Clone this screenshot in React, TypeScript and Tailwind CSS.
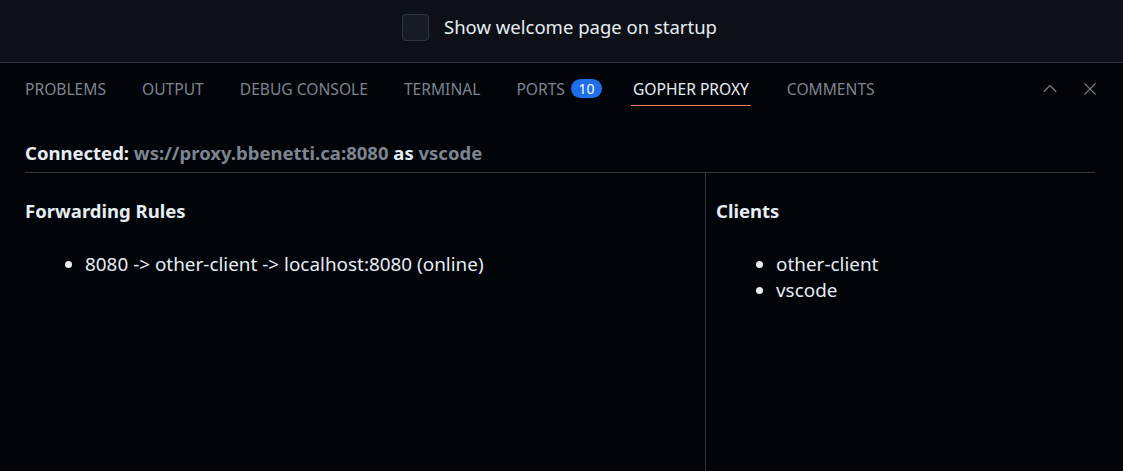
import React from "react";

export default function App() {
  const font = { fontFamily: '"Noto Sans", "Open Sans", sans-serif' };
  const tabs = ["PROBLEMS", "OUTPUT", "DEBUG CONSOLE", "TERMINAL"];
  return (
    <div className="w-[1123px] h-[471px] overflow-hidden bg-[#010409] flex flex-col" style={font}>
      <div className="h-[63px] shrink-0 bg-[#0d1117] border-b border-[#30363d] flex items-center justify-center gap-[15px] pr-[4px] pb-[8px]">
        <div className="w-[27px] h-[27px] rounded-[4px] bg-[#161b22] border border-[#30363d]" />
        <span className="text-[18.5px] text-[#e6edf3]">Show welcome page on startup</span>
      </div>
      <div className="flex items-center h-[50px] pt-[1px] pl-[25px] pr-[24px] shrink-0">
        <div className="flex items-center gap-[36px] text-[15.6px] text-[#7d8590]">
          {tabs.map((t) => (
            <span key={t} className="leading-[20px]">{t}</span>
          ))}
          <span className="flex items-center gap-[6px] leading-[20px]">
            PORTS
            <span className="h-[19px] w-[31px] justify-center rounded-full bg-[#1f6feb] text-white text-[14px] flex items-center">10</span>
          </span>
          <span className="relative text-[#e6edf3] leading-[20px] px-[2px] -ml-[7px]">
            GOPHER PROXY
            <span className="absolute left-0 right-0 top-[26px] h-px bg-[#f78166]" />
          </span>
          <span className="leading-[20px]">COMMENTS</span>
        </div>
        <div className="ml-auto flex items-center gap-[22px] text-[#7d8590]">
          <svg width="18" height="18" viewBox="0 0 16 16" fill="none" stroke="currentColor" strokeWidth="1.1">
            <path d="M2.5 10.5L8 5l5.5 5.5" />
          </svg>
          <svg width="18" height="18" viewBox="0 0 16 16" fill="none" stroke="currentColor" strokeWidth="1.1">
            <path d="M3 3l10 10M13 3L3 13" />
          </svg>
        </div>
      </div>
      <div className="flex-1 flex flex-col pl-[25px] pr-[28px] text-[18.9px] text-[#e6edf3]">
        <div className="h-[60px] shrink-0 flex items-end pb-[5px] border-b border-[#30363d] font-bold text-[18.5px]">
          <span>
            Connected: <span className="text-[#7d8590]">ws://proxy.bbenetti.ca:8080</span> as{" "}
            <span className="text-[#7d8590]">vscode</span>
          </span>
        </div>
        <div className="flex-1 flex">
          <div className="w-[681px] border-r border-[#30363d] pt-[25px]">
            <div className="font-bold leading-[26px] text-[18.5px]">Forwarding Rules</div>
            <ul className="list-disc pl-[60px] mt-[27px] leading-[26px]">
              <li>8080 -&gt; other-client -&gt; localhost:8080 (online)</li>
            </ul>
          </div>
          <div className="flex-1 pl-[10px] pt-[25px]">
            <div className="font-bold leading-[26px] text-[18.5px]">Clients</div>
            <ul className="list-disc pl-[60px] mt-[27px] leading-[26px]">
              <li>other-client</li>
              <li>vscode</li>
            </ul>
          </div>
        </div>
      </div>
    </div>
  );
}
